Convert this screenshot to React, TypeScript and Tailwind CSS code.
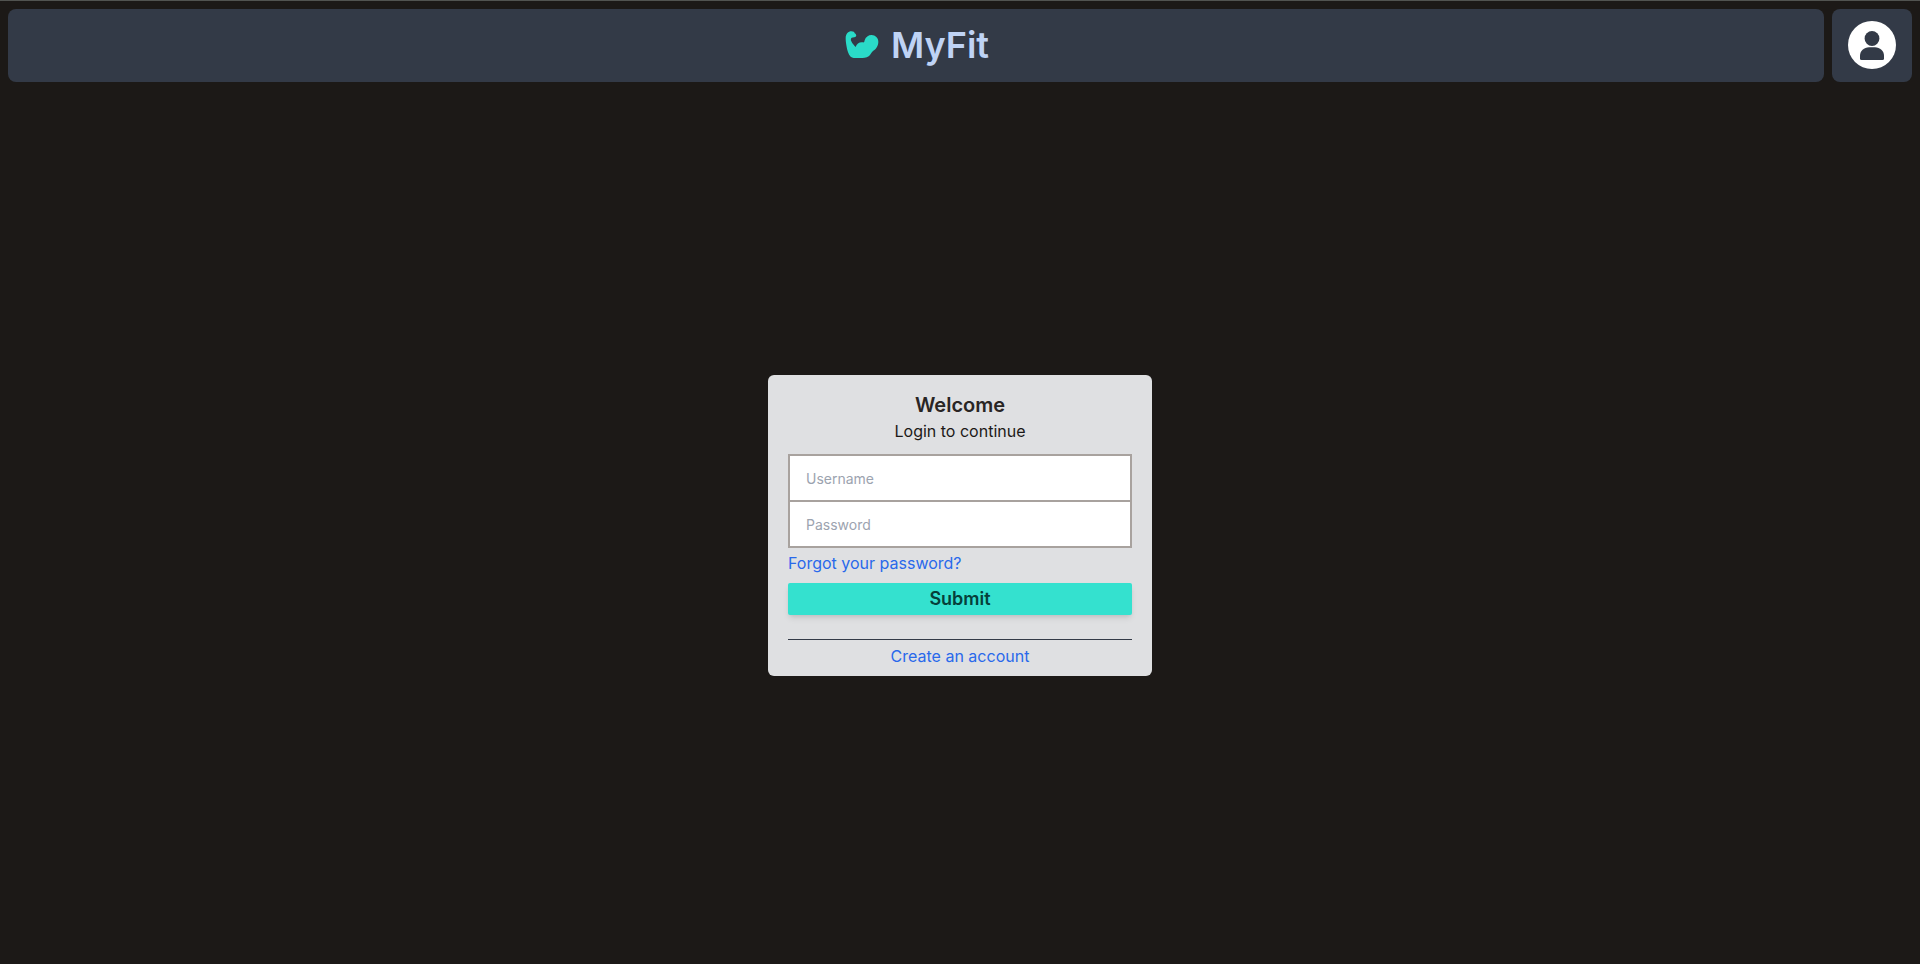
function ArmIcon() {
  return (
    <svg viewBox="0 0 102 84" className="h-7 w-[34px]" fill="#2adbc8" aria-hidden="true">
      <path d="M2 22C2 8 10 1 19 1C25 1 29 3 29 7C33 9 35 13 33 16C31 20 25 19 20 20C17 23 17 27 19 31C22 38 27 43 32 48C35 38 44 32 54 34C58 35 58 32 59 28C62 18 70 12 80 12C91 12 100 21 100 32C100 44 93 55 84 60C79 65 76 72 71 76C64 81 55 81 45 81C36 81 24 82 17 77C10 70 7 59 5 48C3 38 2 30 2 22Z" />
    </svg>
  );
}

function ProfileIcon() {
  return (
    <svg viewBox="0 0 48 48" className="size-12" aria-hidden="true">
      <circle cx="24" cy="24" r="24" fill="#ffffff" />
      <circle cx="24" cy="17.5" r="7.4" fill="#333a47" />
      <path d="M12 36v-1.500C12 30 16 26.200 21 26.200h6C32 26.200 36 30 36 34.500V37.500Q36 39 34.500 39H13.500Q12 39 12 37.500Z" fill="#333a47" />
    </svg>
  );
}

const field =
  "block h-12 w-full border-2 border-[#a8a29e] bg-white px-4 pt-0.5 text-sm text-gray-900 outline-none placeholder:text-[#9ca3af]";

export default function App() {
  return (
    <div className="flex min-h-screen flex-col border-t border-[#515350] bg-[#1c1917] font-['Inter',sans-serif] text-base">
      <header className="flex gap-2 px-2 pt-2">
        <div className="flex flex-1 items-center justify-center gap-3 rounded-lg bg-[#333a47] pb-0.5 pl-0.5">
          <ArmIcon />
          <h1 className="text-4xl font-semibold text-[#bfd3f5]">MyFit</h1>
        </div>
        <button
          type="button"
          aria-label="Profile"
          className="flex h-[73px] w-20 items-center justify-center rounded-lg bg-[#333a47] pb-0.5"
        >
          <ProfileIcon />
        </button>
      </header>
      <main className="flex flex-1 items-center justify-center pt-1">
        <section className="w-96 rounded-md bg-[#dfe0e2] px-5 pt-4 pb-2 text-center">
          <h2 className="text-xl font-semibold text-[#292524]">Welcome</h2>
          <p className="text-[#1c1917]">Login to continue</p>
          <form className="mt-[11px]" onSubmit={(e) => e.preventDefault()}>
            <input className={field} type="text" aria-label="Username" placeholder="Username" />
            <input className={`${field} -mt-0.5`} type="password" aria-label="Password" placeholder="Password" />
            <a href="#forgot" className="mt-[3px] block text-left text-[#2969eb]">
              Forgot your password?
            </a>
            <button
              type="submit"
              className="mt-2 block h-8 w-full rounded-xs bg-[#34e1cf] text-lg leading-8 font-semibold text-[#063f3a] shadow-md"
            >
              Submit
            </button>
          </form>
          <hr className="mt-6 mb-1 border-[#333a47]" />
          <a href="#register" className="block text-[#2969eb]">
            Create an account
          </a>
        </section>
      </main>
    </div>
  );
}
